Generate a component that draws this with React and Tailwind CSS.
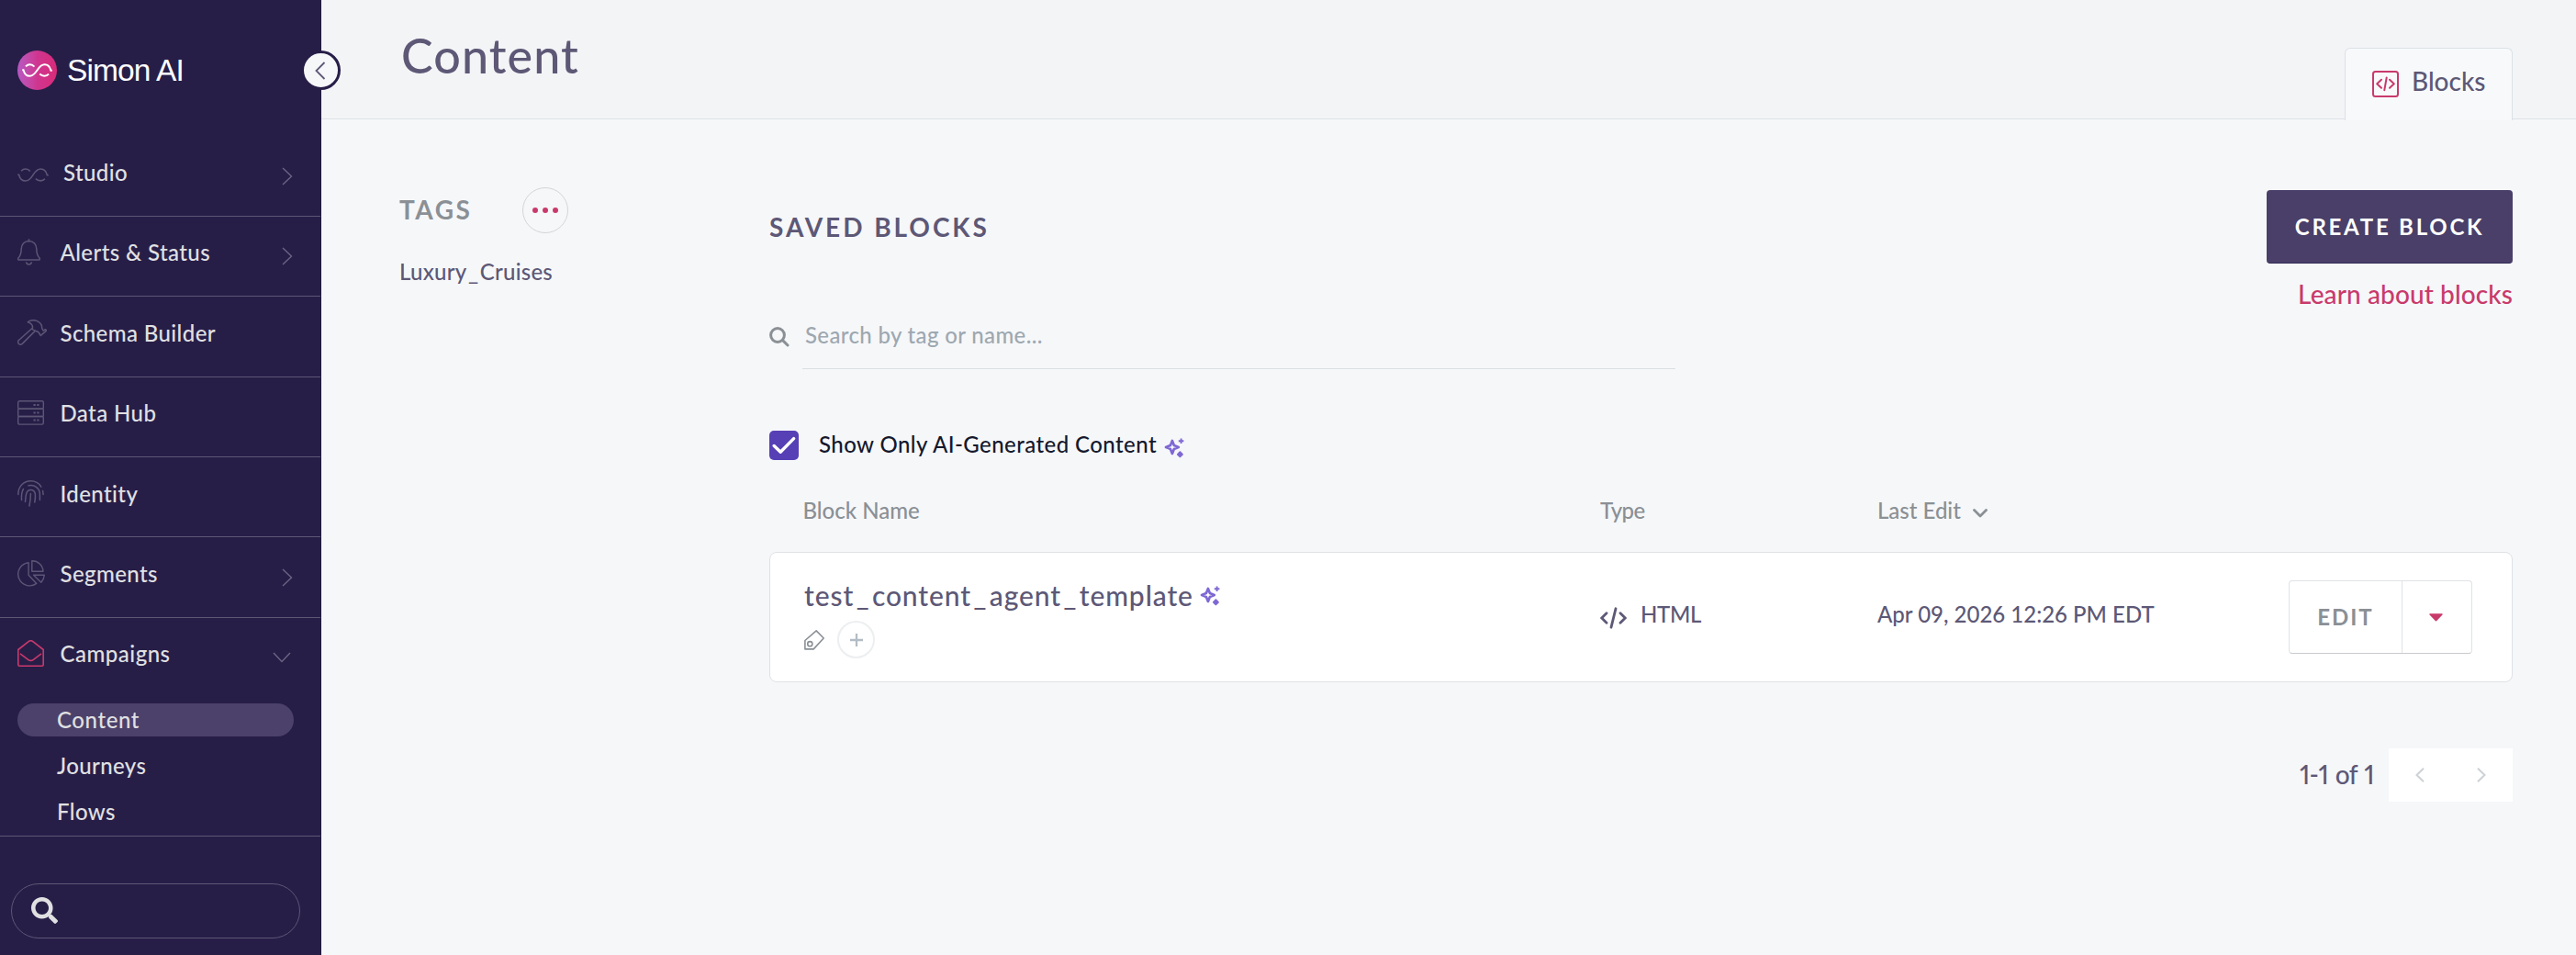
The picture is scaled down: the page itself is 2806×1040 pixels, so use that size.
import { useState } from 'react'
import { FaSearch } from 'react-icons/fa'

function Squiggle({ className }) {
  return (
    <svg className={className} viewBox="0 0 34 15" fill="none" stroke="currentColor">
      <path d="M.2 7.2h1.4C2.6 11.2 5.2 14 8.7 14 13 14 15 10.5 17 7.5S21 1 25.3 1c3.5 0 6.1 2.8 7.1 6.8h1.4" />
      <path d="M4.1 3.2C6.8.3 11.2.3 13.8 3.6M19.9 11.6c3 3 7.6 3 10 .2" />
    </svg>
  )
}

function BellIcon() {
  return (
    <svg width="25" height="29" viewBox="0 0 25 29" fill="none" stroke="currentColor" strokeWidth="1.5">
      <path d="M12.5.2v2.3M12.5 2.5c-5 0-8.3 3.6-8.3 8.5 0 6-1 7.6-3.2 10-.7.9-.3 2.1.8 2.1h21.4c1.1 0 1.5-1.2.8-2.1-2.2-2.4-3.2-4-3.2-10 0-4.9-3.3-8.5-8.3-8.5zM9.5 25.3c.4 1.8 1.5 2.7 3 2.7s2.6-.9 3-2.7" />
    </svg>
  )
}

function HammerIcon() {
  return (
    <svg width="32" height="28" viewBox="0 0 32 28" fill="none" stroke="currentColor" strokeWidth="1.5" strokeLinejoin="round">
      <path d="M11.3 2.7C14 .2 19 .2 22 1.8c3.5 2 5 3.7 4.6 7.2l1.4 3 2.6-1.2 1 1.2-6.3 5.4-1-1.4c-.4-1.5-2-3.2-4.2-3.6L16 10.6c1.2-3 .3-6.6-4.7-7.9z" />
      <path d="M16 9.5L1.2 22.8c-1.2 1.6-.3 4.4 1.6 4.4 1.2.1 1.9-.3 2.7-1.1l14-14" />
    </svg>
  )
}

function DatabaseIcon() {
  return (
    <svg width="29" height="27" viewBox="0 0 29 27" fill="none" stroke="currentColor" strokeWidth="1.4">
      <rect x=".7" y=".7" width="27.6" height="8.6" rx="1.5" />
      <rect x=".7" y="9.3" width="27.6" height="8.2" rx="1" />
      <rect x=".7" y="17.5" width="27.6" height="8.6" rx="1.5" />
      <path d="M17.5 5.1h2.2M21.3 5.1h2.2M17.5 13.4h2.2M21.3 13.4h2.2M17.5 21.6h2.2M21.3 21.6h2.2" strokeWidth="2" />
    </svg>
  )
}

function FingerprintIcon() {
  return (
    <svg width="29" height="29" viewBox="0 0 29 29" fill="none" stroke="currentColor" strokeWidth="1.5" strokeLinecap="round">
      <path d="M.8 15.5C.8 6 7.5.8 14.4.8c5.1 0 9.1 2.5 11.4 6.3M27.6 11.5l.5 4M4.5 21.5c-.3-5.5 0-9 2-12M12 5.8c7-1.8 12.4 3.7 12.4 9.2v6.5" />
      <path d="M8.5 23.5c.3-3.5.5-6.5 1.2-9 1.8-5.5 8.3-5 9.6 0 .4 2.5 0 6.5-.5 9.5M14.4 14.5c0 4.5-.4 8.5-1.4 13.5" />
    </svg>
  )
}

function PieIcon() {
  return (
    <svg width="30" height="29" viewBox="0 0 30 29" fill="none" stroke="currentColor" strokeWidth="1.4" strokeLinejoin="round">
      <path d="M12.1 2.7A12.6 12.6 0 1 0 20.8 25.4L12.1 16.2z" />
      <path d="M15.8.8A12 12 0 0 1 28 12.3H15.8z" />
      <path d="M17.5 16.3h11.8c-.3 3.2-1.3 5.7-3.5 7.9z" />
    </svg>
  )
}

function EnvelopeIcon() {
  return (
    <svg width="29" height="29" viewBox="0 0 29 29" fill="none" stroke="currentColor" strokeWidth="1.6" strokeLinejoin="round">
      <path d="M.8 10.5l11-8.7c1.6-1.3 3.8-1.3 5.4 0l11 8.7v16.2c0 .9-.6 1.5-1.5 1.5H2.3c-.9 0-1.5-.6-1.5-1.5z" />
      <path d="M3 14.8l8.6 6.5c1.8 1.4 4 1.4 5.8 0l8.6-6.5" />
    </svg>
  )
}

function Sparkle() {
  return (
    <svg width="22" height="22" viewBox="0 0 22 22" className="text-[#7f68d4]" fill="none" stroke="currentColor" strokeLinejoin="round">
      <path d="M8.9 2.9l2 5 4.9 2-4.9 2-2 5-2-5-4.9-2 4.9-2z" strokeWidth="2.7" />
      <path d="M18.6.5v5.6M15.8 3.3h5.6" strokeWidth="1.9" />
      <path d="M17.4 15.2l2.6 2.6-2.6 2.6-2.6-2.6z" fill="currentColor" strokeWidth="1.8" />
    </svg>
  )
}

function Chevron({ className }) {
  return (
    <svg width="12" height="20" viewBox="0 0 12 20" fill="none" stroke="currentColor" strokeWidth="1.4" className={className}>
      <path d="M1 1l9.5 9L1 19" />
    </svg>
  )
}

const NAV = [
  { label: 'Studio', icon: <Squiggle className="mt-1.5 w-[34px] h-[15px] stroke-[1.6]" />, arrow: true, slot: 'w-[50px]' },
  { label: 'Alerts & Status', icon: <BellIcon />, arrow: true },
  { label: 'Schema Builder', icon: <HammerIcon /> },
  { label: 'Data Hub', icon: <DatabaseIcon /> },
  { label: 'Identity', icon: <FingerprintIcon /> },
  { label: 'Segments', icon: <PieIcon />, arrow: true },
]

const CAMPAIGN_PAGES = ['Content', 'Journeys', 'Flows']

function Sidebar() {
  const [active, setActive] = useState('Content')

  return (
    <aside className="relative w-[350px] shrink-0 bg-[#271e48] border-r border-[#211a3d] text-[#e0e0e2] text-[24px] font-medium tracking-[0.4px]">
      <div className="flex items-center h-[148.4px] pl-[19px]">
        <div className="w-[43px] h-[43px] mt-1 rounded-full bg-linear-to-r from-[#b758c4] via-[#cf3590] to-[#d92a78] flex items-center justify-center text-white">
          <Squiggle className="w-[33px] h-[15px] stroke-[2]" />
        </div>
        <span className="ml-[11px] mt-1.5 font-['Liberation_Sans',sans-serif] font-normal text-[33.5px] tracking-[-0.9px] text-white">Simon AI</span>
      </div>

      <button type="button" aria-label="Collapse" className="absolute left-[328px] top-[55px] w-[43px] h-[43px] pr-0.5 rounded-full bg-[#f6f7f9] border-[3px] border-[#271e48] flex items-center justify-center text-[#5d5876]">
        <svg width="12" height="20" viewBox="0 0 12 20" fill="none" stroke="currentColor" strokeWidth="1.8">
          <path d="M10.5 1L1.5 10l9 9" />
        </svg>
      </button>

      <nav>
        {NAV.map(({ label, icon, arrow, slot }) => (
          <div key={label} className="h-[87.4px] pl-[19px] pr-[30px] pb-2 flex items-center border-b border-[#5d5675]">
            <span className={`${slot || 'w-[46.5px]'} shrink-0 text-[#5d5675]`}>{icon}</span>
            <span className="flex-1 pt-px">{label}</span>
            {arrow && <Chevron className="mt-2 text-[#6b6583]" />}
          </div>
        ))}

        <div className="border-b border-[#5d5675] pb-2">
          <div className="h-[78px] pl-[19px] pr-[36px] flex items-center">
            <span className="w-[46.5px] shrink-0 text-[#c93a6b]"><EnvelopeIcon /></span>
            <span className="flex-1 pt-px tracking-[0.5px]">Campaigns</span>
            <Chevron className="mt-2 rotate-90 text-[#6b6583]" />
          </div>
          <div className="mt-[15px] ml-[19px] w-[301px] flex flex-col gap-[14px]">
            {CAMPAIGN_PAGES.map((page) => (
              <button
                key={page}
                type="button"
                onClick={() => setActive(page)}
                className={`h-[36px] pl-[43px] pb-px rounded-full text-left leading-[35px] ${active === page ? 'bg-[#4b416a] tracking-[0.6px]' : ''}`}
              >
                {page}
              </button>
            ))}
          </div>
        </div>
      </nav>

      <div className="mt-[51px] ml-[12px] w-[315px] h-[60px] pl-[21px] rounded-full border border-[#5d5675] flex items-center">
        <FaSearch className="w-[29px] h-[29px]" />
      </div>
    </aside>
  )
}

function TagsPanel() {
  return (
    <section className="w-[403px] shrink-0">
      <div className="flex items-center h-[50px]">
        <h3 className="w-[134px] pb-0.5 text-[28px] font-bold tracking-[2.5px] text-[#8a9095]">TAGS</h3>
        <button type="button" aria-label="Tag options" className="w-[50px] h-[50px] rounded-full border border-[#d3d5d8] flex items-center justify-center gap-[5px]">
          <span className="w-1.5 h-1.5 rounded-full bg-[#c93a6b]" />
          <span className="w-1.5 h-1.5 rounded-full bg-[#c93a6b]" />
          <span className="w-1.5 h-1.5 rounded-full bg-[#c93a6b]" />
        </button>
      </div>
      <p className="mt-[26px] text-[24px] leading-[32px] font-medium tracking-[0.25px] text-[#5d5876]">
        Luxury<span className="mx-[1.5px]">_</span>Cruises
      </p>
    </section>
  )
}

function BlockRow() {
  return (
    <div className="mt-[31px] h-[142px] bg-white border border-[#dfe2e5] rounded-lg grid grid-cols-[904px_302px_448px_200px] items-center text-[24px] font-medium text-[#5d5876]">
      <div className="pl-[37px] pt-[2px]">
        <div className="flex items-center gap-[7px] text-[30px] leading-[36px] tracking-[0.9px]">
          <span className="pt-px">
            test<span className="mx-[2.5px]">_</span>content<span className="mx-[2.5px]">_</span>agent<span className="mx-[2.5px]">_</span>template
          </span>
          <span className="pt-[2px]"><Sparkle /></span>
        </div>
        <div className="mt-[10px] flex items-center">
          <svg width="22" height="22" viewBox="0 0 22 22" fill="none" stroke="#8a9095" strokeWidth="1.6" strokeLinejoin="round">
            <path d="M13.2.9l8 8.1-11 11.9H.9v-9.4z" />
            <circle cx="6.3" cy="15.2" r="2.6" />
          </svg>
          <button type="button" aria-label="Add tag" className="ml-[14px] w-[41px] h-[41px] rounded-full border-2 border-[#eceef0] flex items-center justify-center text-[#b3bdc5]">
            <svg width="14" height="14" viewBox="0 0 14 14" stroke="currentColor" strokeWidth="2.3">
              <path d="M7 0v14M0 7h14" />
            </svg>
          </button>
        </div>
      </div>
      <div className="pb-[7px] flex items-center">
        <svg width="29" height="24" viewBox="0 0 29 24" fill="none" stroke="currentColor" strokeWidth="2.8" strokeLinecap="round" className="mt-2">
          <path d="M7 6.8L1.7 12 7 17.2M22 6.8l5.3 5.2-5.3 5.2M17 1.8l-5 20.4" />
        </svg>
        <span className="ml-[15px] tracking-[-0.3px]">HTML</span>
      </div>
      <div className="pb-[7px]">Apr 09, 2026 12:26 PM EDT</div>
      <div className="h-[80px] flex rounded border border-[#dfe2e5] border-b-[#c9cbcf]">
        <button type="button" className="w-[122px] text-[24px] font-bold tracking-[2px] text-[#8a9095]">EDIT</button>
        <button type="button" aria-label="More actions" className="flex-1 pr-[3px] border-l border-[#dfe2e5] flex items-center justify-center">
          <svg width="15" height="9" viewBox="0 0 15 9" fill="#c93a6b">
            <path d="M1 .2h13c.7 0 1 .8.5 1.3L8.3 8c-.5.5-1.1.5-1.6 0L.5 1.5C0 1 .3.2 1 .2z" />
          </svg>
        </button>
      </div>
    </div>
  )
}

export default function App() {
  const [checked, setChecked] = useState(true)

  return (
    <div className="flex w-[2806px] h-[1040px] overflow-hidden bg-[#f6f7f9] font-[Lato,sans-serif] text-[#5d5876]">
      <Sidebar />

      <div className="flex-1">
        <header className="h-[130px] pl-[87px] pr-[69px] flex items-end justify-between bg-[#f3f4f6] border-b border-[#dfe2e5]">
          <h1 className="self-start mt-[30px] text-[52px] leading-[60px] font-medium tracking-[1.1px]">Content</h1>
          <div className="-mb-[2px] w-[183px] h-[79px] pl-[29px] flex items-center rounded-t-md border border-b-0 border-[#dbe1e6] bg-[#f8f9fb]">
            <svg width="29" height="29" viewBox="0 0 29 29" fill="none" stroke="#c93a6b" strokeWidth="2" strokeLinecap="round" strokeLinejoin="round" className="-mt-px">
              <rect x="1" y="1" width="27" height="27" rx="2.5" />
              <path d="M10 9.8l-4.8 4.5 4.8 4.5M19 9.8l4.8 4.5-4.8 4.5M15.700 7.5l-2.4 13.7" />
            </svg>
            <span className="ml-[14px] pb-[9px] text-[28px] leading-[32px] font-medium">Blocks</span>
          </div>
        </header>

        <main className="pl-[85px] pr-[69px] pt-[74px] flex">
          <TagsPanel />

          <section className="flex-1 pt-[3px]">
            <div className="flex justify-between">
              <h2 className="text-[28px] leading-[80px] font-bold tracking-[2.95px]">SAVED BLOCKS</h2>
              <div className="flex flex-col items-end">
                <button type="button" className="w-[268px] h-[80px] rounded bg-[#493f69] border-b border-[#352b56] text-[24px] font-bold tracking-[2.75px] text-white">
                  CREATE BLOCK
                </button>
                <a href="#learn" className="mt-[17px] h-[31px] text-[28px] leading-[33px] font-medium tracking-[0.1px] text-[#c93a6b]">Learn about blocks</a>
              </div>
            </div>

            <div className="flex">
              <svg width="22" height="22" viewBox="0 0 22 22" fill="none" stroke="#8a9095" strokeWidth="3" strokeLinecap="round" className="mt-[21px] mr-[14px]">
                <circle cx="9" cy="9" r="7.4" />
                <path d="M14.6 14.6l5.4 5.4" />
              </svg>
              <input
                className="w-[951px] h-[67px] pl-[3px] pb-[8px] border-b border-[#dcdfe2] text-[24px] font-medium tracking-[0.35px] outline-none placeholder:text-[#9da8b1] placeholder:opacity-100"
                placeholder="Search by tag or name..."
              />
            </div>

            <div className="mt-[67px] h-[32px] flex items-center">
              <button
                type="button"
                role="checkbox"
                aria-checked={checked}
                aria-label="Show only AI-generated content"
                onClick={() => setChecked(!checked)}
                className="w-[32px] h-[32px] rounded-[5px] bg-[#573fb5] flex items-center justify-center"
              >
                {checked && (
                  <svg width="26" height="20" viewBox="0 0 26 20" fill="none" stroke="#fff" strokeWidth="3.4" strokeLinecap="round" strokeLinejoin="round">
                    <path d="M2.2 10.5l7 6.7L23.6 2.6" />
                  </svg>
                )}
              </button>
              <span className="ml-[22px] pb-[2px] text-[24px] leading-[30px] font-medium tracking-[0.43px] text-[#15192d]">Show Only AI-Generated Content</span>
              <span className="ml-[8px] mt-[5px]"><Sparkle /></span>
            </div>

            <div className="mt-[37px] h-[32px] pl-[36.5px] pb-px grid grid-cols-[868.5px_302px_1fr] items-center text-[24px] font-medium text-[#8a9095]">
              <span>Block Name</span>
              <span className="tracking-[-0.5px]">Type</span>
              <span className="flex items-center">
                Last Edit
                <svg width="16" height="10" viewBox="0 0 16 10" fill="none" stroke="currentColor" strokeWidth="2.8" strokeLinecap="round" strokeLinejoin="round" className="ml-[13px] mt-[6px]">
                  <path d="M1.5 1.5L8 8l6.5-6.5" />
                </svg>
              </span>
            </div>

            <BlockRow />

            <div className="mt-[72px] flex justify-end items-center">
              <span className="pb-0.5 text-[28px] font-medium proportional-nums tracking-[-0.5px] [word-spacing:1px]">1-1 of 1</span>
              <div className="ml-[16px] w-[135px] h-[58px] bg-white flex items-center justify-between pl-[29px] pr-[29px] text-[#cdd2d6]">
                <svg width="10" height="16" viewBox="0 0 10 16" fill="none" stroke="currentColor" strokeWidth="2">
                  <path d="M9 .7L1.5 8 9 15.3" />
                </svg>
                <svg width="10" height="16" viewBox="0 0 10 16" fill="none" stroke="currentColor" strokeWidth="2">
                  <path d="M1 .7L8.5 8 1 15.3" />
                </svg>
              </div>
            </div>
          </section>
        </main>
      </div>
    </div>
  )
}
